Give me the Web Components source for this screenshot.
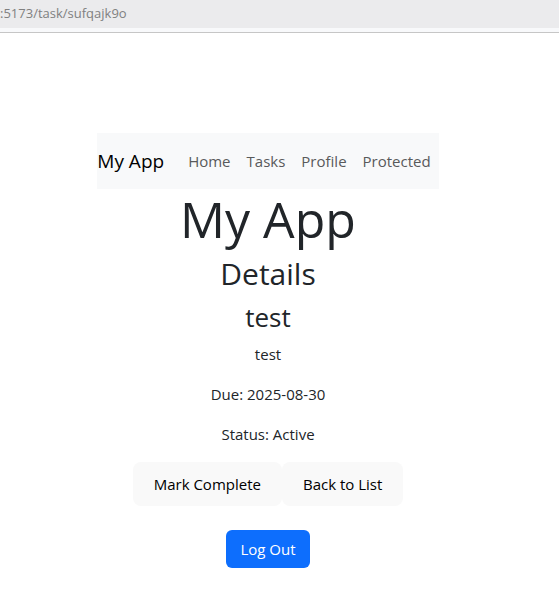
<!DOCTYPE html>
<html lang="en">
<head>
<meta charset="utf-8">
<meta name="viewport" content="width=device-width, initial-scale=1">
<title>My App</title>
<style>
  body { margin: 0; background: #fff; color: #212529; font: 15px/24px "Open Sans", "Noto Sans", sans-serif; }
</style>
</head>
<body>
<my-app></my-app>
<script>
const define = (name, html) => customElements.define(name, class extends HTMLElement {
  constructor() {
    super();
    const t = document.createElement('template');
    t.innerHTML = html;
    this.attachShadow({ mode: 'open' }).append(t.content.cloneNode(true));
  }
});

define('address-bar', `
  <style>
    :host { display: block; background: #f8f9fb; border-bottom: 1px solid #c6c6c6; padding-bottom: 4px; }
    div { background: #ebebed; color: #808080; height: 28px; font-size: 13px; line-height: 27px; overflow: hidden; white-space: nowrap; }
  </style>
  <div><slot></slot></div>`);

define('nav-link', `
  <style>
    :host { display: block; padding: 8px; }
    a { color: #595a5b; text-decoration: none; }
  </style>
  <a href="#"><slot></slot></a>`);

define('nav-bar', `
  <style>
    :host { display: block; background: #f8f9fa; }
    nav { display: flex; align-items: center; padding: 8px 0; }
    .brand { color: #000; font-size: 19px; line-height: 30px; margin-right: 16px; text-decoration: none; white-space: nowrap; }
    .links { display: flex; }
  </style>
  <nav><a class="brand" href="#">My App</a><div class="links"><slot></slot></div></nav>`);

define('app-button', `
  <style>
    :host { display: block; }
    button { display: block; font: inherit; font-weight: 400; color: #000; background: #f9f9f9; border: 0; border-radius: 8px; padding: 10px 21px; cursor: pointer; white-space: nowrap; }
    :host([variant="primary"]) button { color: #fff; background: #0d6efd; border-radius: 6px; padding: 7px 14px; }
    :host(:not([variant])) button { font-weight: 500; }
  </style>
  <button type="button"><slot></slot></button>`);

define('task-details', `
  <style>
    :host { display: block; text-align: center; }
    h2, h3 { font-weight: 400; margin: 0 0 8px; }
    h2 { font-size: 30px; line-height: 39px; }
    h3 { font-size: 26px; line-height: 33px; }
    p { margin: 0 0 16px; }
    .actions { display: flex; justify-content: center; }
  </style>
  <h2>Details</h2>
  <h3>test</h3>
  <p>test</p>
  <p>Due: 2025-08-30</p>
  <p>Status: Active</p>
  <div class="actions"><app-button>Mark Complete</app-button><app-button>Back to List</app-button></div>`);

define('my-app', `
  <style>
    :host { display: block; }
    main { display: flex; flex-direction: column; align-items: center; padding: 100px 23px 40px 0; }
    h1 { margin: 0 0 4px; font-size: 50px; font-weight: 400; line-height: 61px; }
    .logout { margin-top: 24px; }
  </style>
  <address-bar>:5173/task/sufqajk9o</address-bar>
  <main>
    <nav-bar><nav-link>Home</nav-link><nav-link>Tasks</nav-link><nav-link>Profile</nav-link><nav-link>Protected</nav-link></nav-bar>
    <h1>My App</h1>
    <task-details></task-details>
    <app-button class="logout" variant="primary">Log Out</app-button>
  </main>`);
</script>
</body>
</html>
